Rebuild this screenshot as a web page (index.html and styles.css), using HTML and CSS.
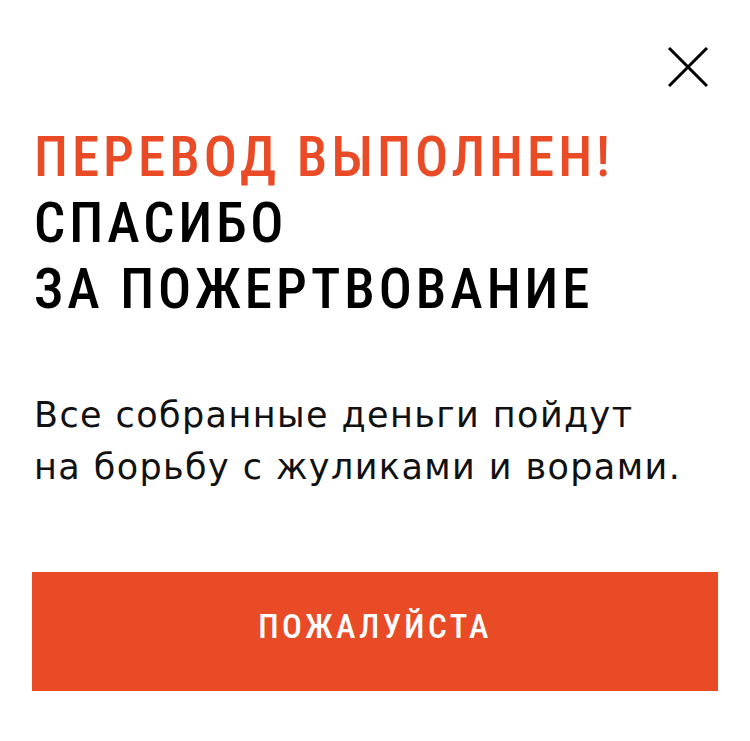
FILE: index.html
```html
<!DOCTYPE html>
<html lang="ru">
<head>
    <meta charset="UTF-8">
    <meta name="viewport" content="width=device-width, initial-scale=1.0">
    <title>Перевод выполнен</title>
    <link rel="stylesheet" href="styles.css">
</head>
<body>
    <div class="modal">
        <button class="close-button" aria-label="Закрыть">
            <svg width="40" height="40" viewBox="0 0 40 40">
                <path d="M1 1 L39 39 M39 1 L1 39" stroke="#000" stroke-width="3" fill="none"/>
            </svg>
        </button>

        <h1 class="title">
            <span class="title-accent">Перевод выполнен!</span><br>
            Спасибо<br>
            за пожертвование
        </h1>

        <p class="message">Все собранные деньги пойдут<br>на борьбу с жуликами и ворами.</p>

        <button class="action-button">Пожалуйста</button>
    </div>
</body>
</html>
```

FILE: styles.css
```css
body {
    margin: 0;
    background: #fff;
    font-family: "DejaVu Sans", sans-serif;
}
.modal {
    position: relative;
    width: 750px;
    height: 741px;
    box-sizing: border-box;
    padding: 124px 32px 0;
    display: flex;
    flex-direction: column;
}
.close-button {
    position: absolute;
    top: 47px;
    right: 42px;
    width: 40px;
    height: 40px;
    padding: 0;
    border: none;
    background: none;
    cursor: pointer;
}
.close-button svg {
    display: block;
}
.title {
    margin: 0 0 0 2px;
    font-family: Roboto, sans-serif;
    font-stretch: condensed;
    font-weight: 500;
    font-size: 55px;
    line-height: 66px;
    letter-spacing: 4px;
    text-transform: uppercase;
    color: #000;
}
.title-accent {
    color: #e94b27;
}
.message {
    margin: 67px 0 0 2px;
    font-size: 35px;
    line-height: 52px;
    letter-spacing: 1.4px;
    color: #111;
}
.action-button {
    margin-top: 79px;
    height: 119px;
    padding: 0 0 10px;
    border: none;
    background: #e94b27;
    color: #fff;
    font-family: Roboto, sans-serif;
    font-stretch: condensed;
    font-weight: 500;
    font-size: 33px;
    letter-spacing: 3.4px;
    text-transform: uppercase;
    cursor: pointer;
}
```
